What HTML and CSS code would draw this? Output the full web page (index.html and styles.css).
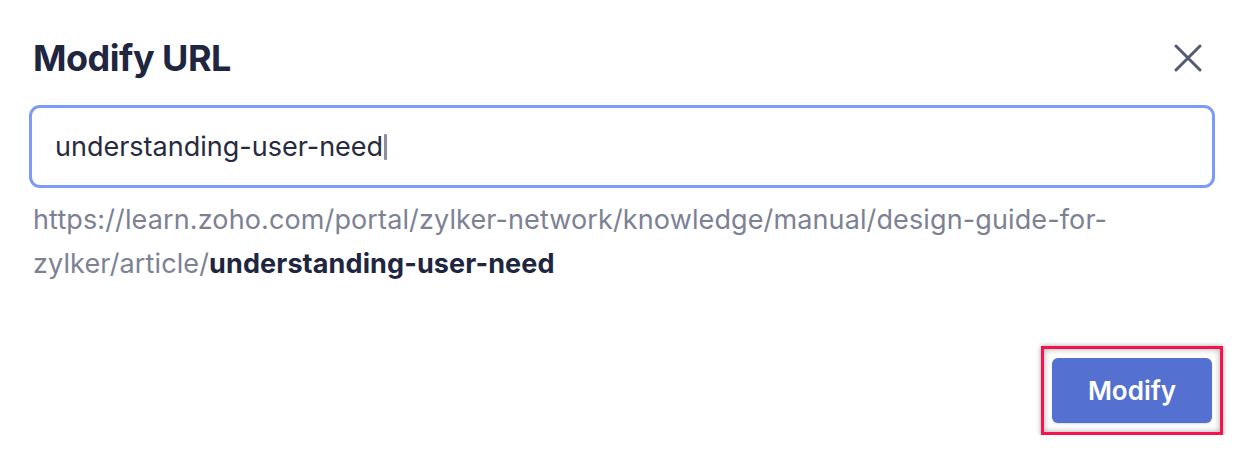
FILE: index.html
```html
<!DOCTYPE html>
<html lang="en">
<head>
<meta charset="utf-8">
<title>Modify URL</title>
<link rel="stylesheet" href="styles.css">
</head>
<body>
<div class="dialog">
  <div class="header">
    <h1 class="title">Modify URL</h1>
    <button class="close" aria-label="Close">
      <svg width="28" height="28" viewBox="0 0 28 28"><path d="M2 2 L26 26 M26 2 L2 26" stroke="#535a72" stroke-width="3" stroke-linecap="round"/></svg>
    </button>
  </div>
  <div class="field"><span class="value">understanding-user-need</span><span class="caret"></span></div>
  <p class="preview">https://learn.zoho.com/portal/zylker-network/knowledge/manual/design-guide-for-zylker/article/<strong>understanding-user-need</strong></p>
  <div class="footer">
    <div class="highlight">
      <button class="primary">Modify</button>
    </div>
  </div>
</div>
</body>
</html>
```

FILE: styles.css
```css
* { box-sizing: border-box; }
html, body { margin: 0; background: #fff; }
body { font-family: Inter, "Open Sans", sans-serif; }
.dialog { padding: 30px 15px 0 29px; }
.header { display: flex; justify-content: space-between; align-items: center; height: 56px; margin-bottom: 19px; padding-right: 21px; }
.title { margin: 0 0 0 4px; font-size: 36px; line-height: 1; font-weight: 700; color: #1f2640; letter-spacing: -0.5px; }
.close { border: 0; background: none; padding: 0; width: 28px; height: 28px; display: flex; cursor: pointer; }
.field { height: 83px; border: 3px solid #7c9af6; border-radius: 11px; display: flex; align-items: center; padding-left: 23px; width: 1186px; }
.value { font-size: 27px; color: #262b40; }
.caret { display: inline-block; width: 3px; height: 26px; background: #8b8f9e; border-radius: 1px; margin-left: 1px; }
.preview { margin: 10px 0 0 4px; font-size: 27px; line-height: 44px; color: #7d8194; width: 1150px; letter-spacing: 0.12px; }
.preview strong { color: #1f2640; font-weight: 700; }
.footer { display: flex; justify-content: flex-end; margin-top: 60px; }
.highlight { border: 3px solid #f5124f; padding: 9px 8px; box-shadow: 0 0 5px rgba(0,0,0,0.35), inset 0 0 6px rgba(0,0,0,0.35); }
.primary { width: 160px; height: 65px; border: 0; border-radius: 6px; background: #5470d1; color: #fff; font-family: Inter, sans-serif; font-size: 26px; font-weight: 600; cursor: pointer; box-shadow: 0 1px 2px rgba(0,0,0,0.15); }
```
